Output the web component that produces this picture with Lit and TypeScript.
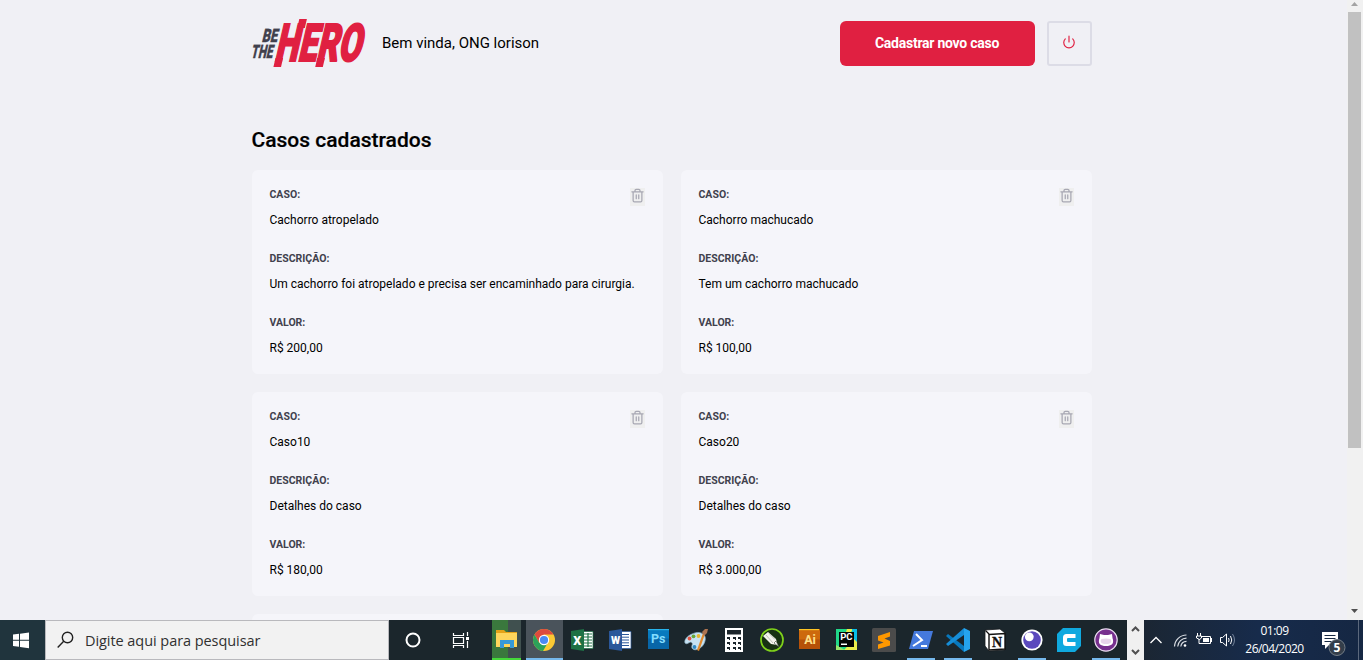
import { LitElement, html, css, svg, nothing, TemplateResult } from "lit";
import { customElement, property } from "lit/decorators.js";
import { classMap } from "lit/directives/class-map.js";

interface Incident {
  title: string;
  description: string;
  value: string;
}

const incidents: Incident[] = [
  { title: "Cachorro atropelado", description: "Um cachorro foi atropelado e precisa ser encaminhado para cirurgia.", value: "R$ 200,00" },
  { title: "Cachorro machucado", description: "Tem um cachorro machucado", value: "R$ 100,00" },
  { title: "Caso10", description: "Detalhes do caso", value: "R$ 180,00" },
  { title: "Caso20", description: "Detalhes do caso", value: "R$ 3.000,00" },
];

@customElement("hero-logo")
class HeroLogo extends LitElement {
  static styles = css`
    :host { display: block; width: 114px; height: 50px; }
    .logo { display: block; overflow: visible; }
    .small { font: 900 18.5px Roboto, sans-serif; fill: #41414d; stroke: #41414d; stroke-width: 0.4; }
    .large { font: 900 52px Roboto, sans-serif; fill: #e02041; stroke: #e02041; stroke-width: 2; }
    .accent { fill: #e02041; }
  `;
  render() {
    return html`<svg class="logo" width="114" height="50" viewBox="0 0 114 50">
      <g transform="translate(9.5 24) skewX(-13)"><text class="small" textLength="15.5" lengthAdjust="spacingAndGlyphs">BE</text></g>
      <g transform="translate(-1.5 39.5) skewX(-13)"><text class="small" textLength="21.5" lengthAdjust="spacingAndGlyphs">THE</text></g>
      <g transform="translate(22 43) skewX(-13)">
        <text class="large" textLength="86" lengthAdjust="spacingAndGlyphs">HERO</text>
        <path class="accent" d="M.8-3h7.600v9H.8zM15.600-42h7.600v9h-7.600zM42.600-3h7.600v9h-7.600z" />
      </g>
    </svg>`;
  }
}

@customElement("incident-card")
class IncidentCard extends LitElement {
  @property({ attribute: false }) incident?: Incident;
  static styles = css`
    :host { display: block; }
    .card { position: relative; box-sizing: border-box; height: 204px; padding: 18px; background: #f5f5fa; border-radius: 6px; }
    .label { margin: 0 0 12px; font-size: 10.5px; font-weight: 700; line-height: 13px; color: #41414d; }
    .text { margin: 0 0 24px; font-size: 12px; line-height: 15px; color: #000; white-space: nowrap; }
    .remove { position: absolute; top: 18px; right: 18px; width: 15px; height: 18px; padding: 0; border: 0; background: #efefef; display: flex; justify-content: center; align-items: flex-start; }
  `;
  render() {
    if (!this.incident) return html`<article class="card">${nothing}</article>`;
    const { title, description, value } = this.incident;
    return html`<article class="card">
      <p class="label">CASO:</p><p class="text">${title}</p>
      <p class="label">DESCRIÇÃO:</p><p class="text">${description}</p>
      <p class="label">VALOR:</p><p class="text">${value}</p>
      <button class="remove" aria-label="Excluir">
        <svg width="15" height="15" viewBox="0 0 24 24" fill="none" stroke="#a8a8b3" stroke-width="2" stroke-linecap="round" stroke-linejoin="round">
          <path d="M3 6h18M19 6v14a2 2 0 0 1-2 2H7a2 2 0 0 1-2-2V6m3 0V4a2 2 0 0 1 2-2h4a2 2 0 0 1 2 2v2M10 11v6M14 11v6" />
        </svg>
      </button>
    </article>`;
  }
}

interface TaskIcon { name: string; art: TemplateResult; active?: boolean; running?: boolean; }

const taskIcons: TaskIcon[] = [
  { name: "Chrome", active: true, art: svg`
    <circle cx="12" cy="12" r="11" fill="#fbc934"/>
    <path d="M2.5 6.5A11 11 0 0 1 21.5 6.5H12L7 14.5z" fill="#de4b3e"/>
    <path d="M2.5 6.5A11 11 0 0 0 11 23l5-8.5-4 2.5-5-2.5z" fill="#2ca15a"/>
    <circle cx="12" cy="12" r="5.2" fill="#fff"/><circle cx="12" cy="12" r="4.1" fill="#4a8af4"/>` },
  { name: "Excel", art: svg`
    <path d="M12 3.5h11v17H12z" fill="#fff" stroke="#1e7145" stroke-width=".7"/>
    <path d="M14 6h8M14 9h8M14 12h8M14 15h8M14 18h8M18 5v14" stroke="#1e7145" stroke-width="1.2"/>
    <path d="M1 3l13-2v22L1 21z" fill="#1e7145"/><text x="7.3" y="16.5" font-size="12.5" font-weight="900" text-anchor="middle" fill="#fff">X</text>` },
  { name: "Word", art: svg`
    <path d="M12 3.5h11v17H12z" fill="#fff" stroke="#2b579a" stroke-width=".7"/>
    <path d="M14 6.5h7M14 9.2h7M14 12h7M14 14.8h7M14 17.5h7" stroke="#2b579a" stroke-width="1"/>
    <path d="M1 3l13-2v22L1 21z" fill="#2b579a"/><text x="7.5" y="16" font-size="10.5" font-weight="900" text-anchor="middle" fill="#fff">W</text>` },
  { name: "Photoshop", art: svg`
    <path d="M2 1h21v20H2z" fill="#0866a8"/><path d="M2 1h21v1.500H2z" fill="#28b4ec"/><path d="M2 2.500h21v8H2z" fill="#087abf"/>
    <text x="12.2" y="15" font-size="12.500" font-weight="700" text-anchor="middle" fill="#83ddff">Ps</text>` },
  { name: "Paint", art: svg`
    <path d="M8 6c8-4 15 0 13 7-2 8-11 11-13 7-1-3 2-4-1-6-2 0-4 3-6 1-1-3 2-7 7-9z" fill="#c7e2f2" stroke="#8eb1c6" stroke-width=".7"/>
    <circle cx="5.500" cy="10.500" r="1.900" fill="#df5745"/><circle cx="9.500" cy="8.300" r="1.900" fill="#67a939"/><circle cx="14.500" cy="8" r="1.900" fill="#e8b830"/><circle cx="10.500" cy="19" r="1.900" fill="#3188c2"/>
    <path d="M19 5l2 1-6 17-2-1z" fill="#e28a2e"/><path d="M18 4l3-3h3l-1 4-3 3z" fill="#ad7451"/>` },
  { name: "Calculadora", art: svg`
    <path d="M3 0h18v24H3z" fill="#fff"/><path d="M5 2h14v4.500H5z" fill="#1b252b"/>
    <path d="M5 9h3v3H7v-1H5zM11 9h3v3h-1v-1h-2zM16 9h3v3h-1v-1h-2zM5 14h3v3H7v-1H5zM11 14h3v3h-1v-1h-2zM16 14h3v3h-1v-1h-2zM5 19h3v3H7v-1H5zM11 19h3v3h-1v-1h-2zM16 19h3v3h-1v-1h-2z" fill="#1b252b"/>` },
  { name: "CorelDRAW", art: svg`
    <circle cx="12" cy="12" r="11" fill="#173113" stroke="#7fd11b" stroke-width="1.7"/>
    <path d="M3 8l5-4 8 7 1.500 6-6.500-1z" fill="#f4f4ee"/><path d="M6 7l7 8M9 5.500l6 6" stroke="#a5aaa1" stroke-width=".7"/><path d="M14 15l2-2 3 6z" fill="#fff" stroke="#34412d" stroke-width=".6"/>` },
  { name: "Illustrator", art: svg`
    <path d="M1 1h21v20H1z" fill="#b65108"/><path d="M1 1h20v1.500H1z" fill="#ffc625"/><path d="M1 2.500h21v9H1z" fill="#cd690d"/>
    <text x="12" y="15.500" font-size="12.500" font-weight="700" text-anchor="middle" fill="#ffe08a">Ai</text>` },
  { name: "PyCharm", art: svg`
    <path d="M1 1h21v21H1z" fill="#21d789"/><path d="M22 8v14H9z" fill="#e9ed4c"/><path d="M1 22v-5l9 5z" fill="#9be66a"/><path d="M12 1h6l-2 3h-5z" fill="#e9ed4c"/><path d="M17 1h5v13l-4-4z" fill="#07bde7"/>
    <path d="M4 4h15v15H4z" fill="#050505"/><text x="11.400" y="12" font-size="9.500" font-weight="700" text-anchor="middle" fill="#fff">PC</text><path d="M6 15.500h6V17H6z" fill="#fff"/>` },
  { name: "Sublime Text", art: svg`
    <rect width="24" height="24" rx="1.500" fill="#4b4b4b"/>
    <path d="M18 4v4.500l-5.500 2L18 13v4.500L6 21v-4.500l5.500-2L6 12.500V8z" fill="#ff9800"/>` },
  { name: "PowerShell", running: true, art: svg`
    <path d="M5 3h19l-5 18H0z" fill="#4579dc"/><path d="M7 6l6 6-9 6M12 18h6" fill="none" stroke="#fff" stroke-width="2"/>` },
  { name: "Visual Studio Code", running: true, art: svg`
    <path d="M0 8l2-2 16 12v6z" fill="#0878bd"/><path d="M0 16L18 0v7L2 18z" fill="#168dd7"/><path d="M18 0l6 3v18l-6 3z" fill="#25a4ee"/>` },
  { name: "Notion", art: svg`
    <path d="M2 2l15-1 5 4v17L6 23l-4-5z" fill="#fff" stroke="#15191d" stroke-width=".8"/><path d="M6 6.500l16-1V21L6 22z" fill="#fff" stroke="#111" stroke-width="1.400"/><path d="M2.500 2.500L6 6" stroke="#111" stroke-width="1.300"/>
    <text x="14" y="18.800" font-family="Liberation Serif" font-size="14" font-weight="700" text-anchor="middle" fill="#111" stroke="#111" stroke-width=".3">N</text>` },
  { name: "Insomnia", running: true, art: svg`
    <circle cx="12" cy="12" r="10.600" fill="#fff"/><circle cx="12" cy="12" r="8.800" fill="#5b49bd"/><circle cx="9.300" cy="8.800" r="4.400" fill="#fff"/>` },
  { name: "Cura", art: svg`
    <path d="M6 0h18v18l-6 6H0V6z" fill="#10a9df"/><path d="M18.500 6H9.500Q6 6 6 9.500v5Q6 18 9.500 18h9v-4H11q-1 0-1-1v-2q0-1 1-1h7.500z" fill="#fff"/>` },
  { name: "GitHub Desktop", running: true, art: svg`
    <circle cx="12" cy="12" r="11.200" fill="#77308e" stroke="#eadff0" stroke-width="1.200"/>
    <path d="M6 6l4 1h4l4-1 .5 4c2 6-1 8-6.500 8S3.500 16 5.500 10z" fill="#fff"/><path d="M7.500 11q4.500-1 9 0c2 3 0 5-4.500 5s-6.500-2-4.500-5z" fill="#e8d5eb"/>` },
];

@customElement("task-bar")
class TaskBar extends LitElement {
  static styles = css`
    :host { display: block; }
    .bar { display: grid; grid-template-columns: 45px 344px 48px 47px 8px 29px 4px 600px 2px 17px 219px; height: 40px; background: #1b262c; color: #fff; font-family: "Open Sans", sans-serif; }
    .cell { display: flex; align-items: center; justify-content: center; }
    .start { background: #20343d; padding-right: 4px; }
    .search { box-sizing: border-box; border: 1px solid #b9b9bd; background: #f2f2f2; display: flex; align-items: center; padding-left: 11px; gap: 11px; color: #303030; font-size: 14.5px; letter-spacing: -0.06px; white-space: nowrap; }
    .folder { box-sizing: border-box; padding-right: 1px; background: linear-gradient(90deg, #3a783d 16px, #40504f 16px); border-bottom: 2px solid #45d93a; }
    .apps { display: grid; grid-template-columns: 38px repeat(7, 38px) 36px repeat(7, 37px) 1px; }
    .app { display: flex; flex-direction: column; align-items: center; justify-content: space-between; padding-top: 8px; font-family: Roboto, sans-serif; }
    .app.active { margin-left: 1px; background: #4a535b; }
    .active .glyph { margin-right: 1px; }
    .underline { width: 28px; height: 2px; background: transparent; }
    .running .underline { background: #76b9ed; }
    .active .underline { width: 100%; background: #76b9ed; }
    .spin { background: #f0f0f0; }
    .tray { display: grid; grid-template-columns: 24px 24px 24px 23px 71px 53px; background: linear-gradient(90deg, #1b2633, #172b4b 52%, #152743); }
    .clock { display: flex; flex-direction: column; align-items: center; justify-content: center; font-size: 12px; line-height: 18px; letter-spacing: -0.53px; white-space: nowrap; }
    .badge-text { font: 700 12px "Open Sans", sans-serif; }
  `;
  render() {
    return html`<footer class="bar">
      <div class="cell start"><svg width="17" height="17" viewBox="0 0 17 17" fill="#fff"><path d="M1 2.600l6-.8v6H1zM8 1.700L17 .4v7.400H8zM1 8.700h6v6l-6-.8zM8 8.700h9v7.500l-9-1.300z"/></svg></div>
      <div class="search"><svg width="17" height="18" viewBox="0 0 17 18" fill="none" stroke="#222" stroke-width="1.400"><circle cx="10.500" cy="6.500" r="5.200"/><path d="M6.700 10.200L.7 16.500"/></svg><span>Digite aqui para pesquisar</span></div>
      <div class="cell"><svg width="16" height="16" viewBox="0 0 16 16"><circle cx="8" cy="8" r="6.500" fill="none" stroke="#fff" stroke-width="2"/></svg></div>
      <div class="cell"><svg width="18" height="18" viewBox="0 0 18 18" fill="none" stroke="#fff" stroke-width="1.200"><path d="M1.500 2v2.500h10V2M1.500 6.500h10v6h-10zM1.500 17v-2.500h10V17M15.500 1v4M15.500 10v7"/><path fill="#fff" stroke="none" d="M14 6h3v3h-3z"/></svg></div>
      <span></span>
      <div class="cell folder"><svg width="23" height="20" viewBox="0 0 23 20"><path d="M1 1h8l2 2h11v5H1z" fill="#e5a318"/><path d="M1 4h21v14H1z" fill="#ffd55c"/><path d="M5 19v-8h14v8h-4v-4H9v4z" fill="#3799d8"/></svg></div>
      <span></span>
      <div class="apps">${taskIcons.map((icon) => html`<div class=${classMap({ app: true, active: !!icon.active, running: !!icon.running })}>
        <svg class="glyph" width="24" height="24" viewBox="0 0 24 24" aria-label=${icon.name}>${icon.art}</svg><span class="underline"></span></div>`)}</div>
      <span></span>
      <div class="cell spin"><svg width="17" height="40" viewBox="0 0 17 40" fill="none" stroke="#505050" stroke-width="2"><path d="M5 11l3.500-3.500L12 11M5 30l3.500 3.500L12 30"/></svg></div>
      <div class="tray">
        <div class="cell"><svg width="14" height="10" viewBox="0 0 14 10" fill="none" stroke="#fff" stroke-width="1.300"><path d="M1.500 8L7 2.500 12.500 8"/></svg></div>
        <div class="cell"><svg width="15" height="15" viewBox="0 0 15 15" fill="none" stroke="#d9dde3" stroke-width="1.200"><path d="M1.500 13.500A12 12 0 0 1 13.500 2M4.700 13.500a9 9 0 0 1 8.800-8.300M7.800 13.500a6 6 0 0 1 5.700-5.200"/><circle cx="12" cy="12.500" r="1.300" fill="#fff" stroke="none"/></svg></div>
        <div class="cell"><svg width="17" height="16" viewBox="0 0 17 16" fill="none" stroke="#fff"><path d="M5.500 4.500h9v7h-9M15.500 6v4"/><path d="M7 6h6v4H7z" fill="#fff" stroke="none"/><path d="M1.500 1v3M4.500 1v3M.5 4h5v2l-2 1.500-3-1.500zM3 7v4.500h3"/></svg></div>
        <div class="cell"><svg width="17" height="16" viewBox="0 0 17 16" fill="none" stroke="#fff"><path d="M1.500 5.500h2l4-3.500v12l-4-3.500h-2zM9.500 6q1.200 2 0 4M11.500 4q2.500 4 0 8"/><path d="M13.500 2q4 6 0 12" stroke="#74839a"/></svg></div>
        <div class="clock"><span>01:09</span><span>26/04/2020</span></div>
        <div class="cell"><svg width="53" height="40" viewBox="0 0 53 40"><path d="M12 12h16v13h-9l-4 4v-4h-3z" fill="#fff"/><path d="M14.500 15.500h11M14.500 18.500h11M14.500 21.500h7" stroke="#172943"/><circle cx="27" cy="27.500" r="8" fill="#343e4a" stroke="#737c86"/><text class="badge-text" x="27" y="32" text-anchor="middle" fill="#fff">5</text><path d="M48.500 0v40" stroke="#5b687c"/></svg></div>
      </div>
    </footer>`;
  }
}

@customElement("app-root")
class AppRoot extends LitElement {
  static styles = css`
    :host { display: block; width: 1363px; height: 660px; overflow: hidden; font-family: Roboto, sans-serif; -webkit-font-smoothing: antialiased; }
    .window { display: grid; grid-template-columns: 1347px 16px; height: 620px; }
    .page { background: #f0f0f5; overflow: hidden; height: 620px; }
    .content { box-sizing: border-box; width: 840px; margin-left: 251.5px; padding-top: 18px; }
    .header { display: flex; align-items: center; height: 50px; }
    .welcome { margin-left: 16.5px; font-size: 15px; }
    .new { display: flex; align-items: center; justify-content: center; margin-left: auto; width: 195px; height: 45px; background: #e02041; color: #fff; border-radius: 6px; font-size: 14px; letter-spacing: -0.25px; font-weight: 700; }
    .power { box-sizing: border-box; display: flex; align-items: center; justify-content: center; margin-left: 12px; width: 45px; height: 45px; padding: 0 1px 3px 0; border: 2px solid #dcdce6; border-radius: 3px; background: transparent; }
    .title { margin: 60px 0 18px; font-size: 21px; line-height: 24px; font-weight: 500; -webkit-text-stroke: 0.2px #000; }
    .cards { display: grid; grid-template-columns: 1fr 1fr; gap: 18px; }
    .scroll { display: grid; grid-template-rows: 12px 436px 1fr 18px; background: #f1f1f1; justify-items: start; }
    .thumb { width: 13px; margin-left: 1px; background: #c1c1c1; }
    .arrow { display: block; }
  `;
  render() {
    return html`<div class="window">
      <main class="page"><div class="content">
        <header class="header">
          <hero-logo></hero-logo><span class="welcome">Bem vinda, ONG lorison</span>
          <a class="new">Cadastrar novo caso</a>
          <button class="power" aria-label="Sair"><svg width="14" height="14" viewBox="0 0 24 24" fill="none" stroke="#e02041" stroke-width="2" stroke-linecap="round"><path d="M18.360 6.640a9 9 0 1 1-12.730 0M12 2v10"/></svg></button>
        </header>
        <h1 class="title">Casos cadastrados</h1>
        <section class="cards">
          ${incidents.map((incident) => html`<incident-card .incident=${incident}></incident-card>`)}
          <incident-card></incident-card>
        </section>
      </div></main>
      <div class="scroll">
        <svg class="arrow" width="15" height="12" viewBox="0 0 15 12" fill="#a3a3a3"><path d="M4 6l3.500-4L11 6z"/></svg>
        <span class="thumb"></span><span></span>
        <svg class="arrow" width="15" height="18" viewBox="0 0 15 18" fill="#505050"><path d="M4 7h7l-3.500 4z"/></svg>
      </div>
    </div><task-bar></task-bar>`;
  }
}
